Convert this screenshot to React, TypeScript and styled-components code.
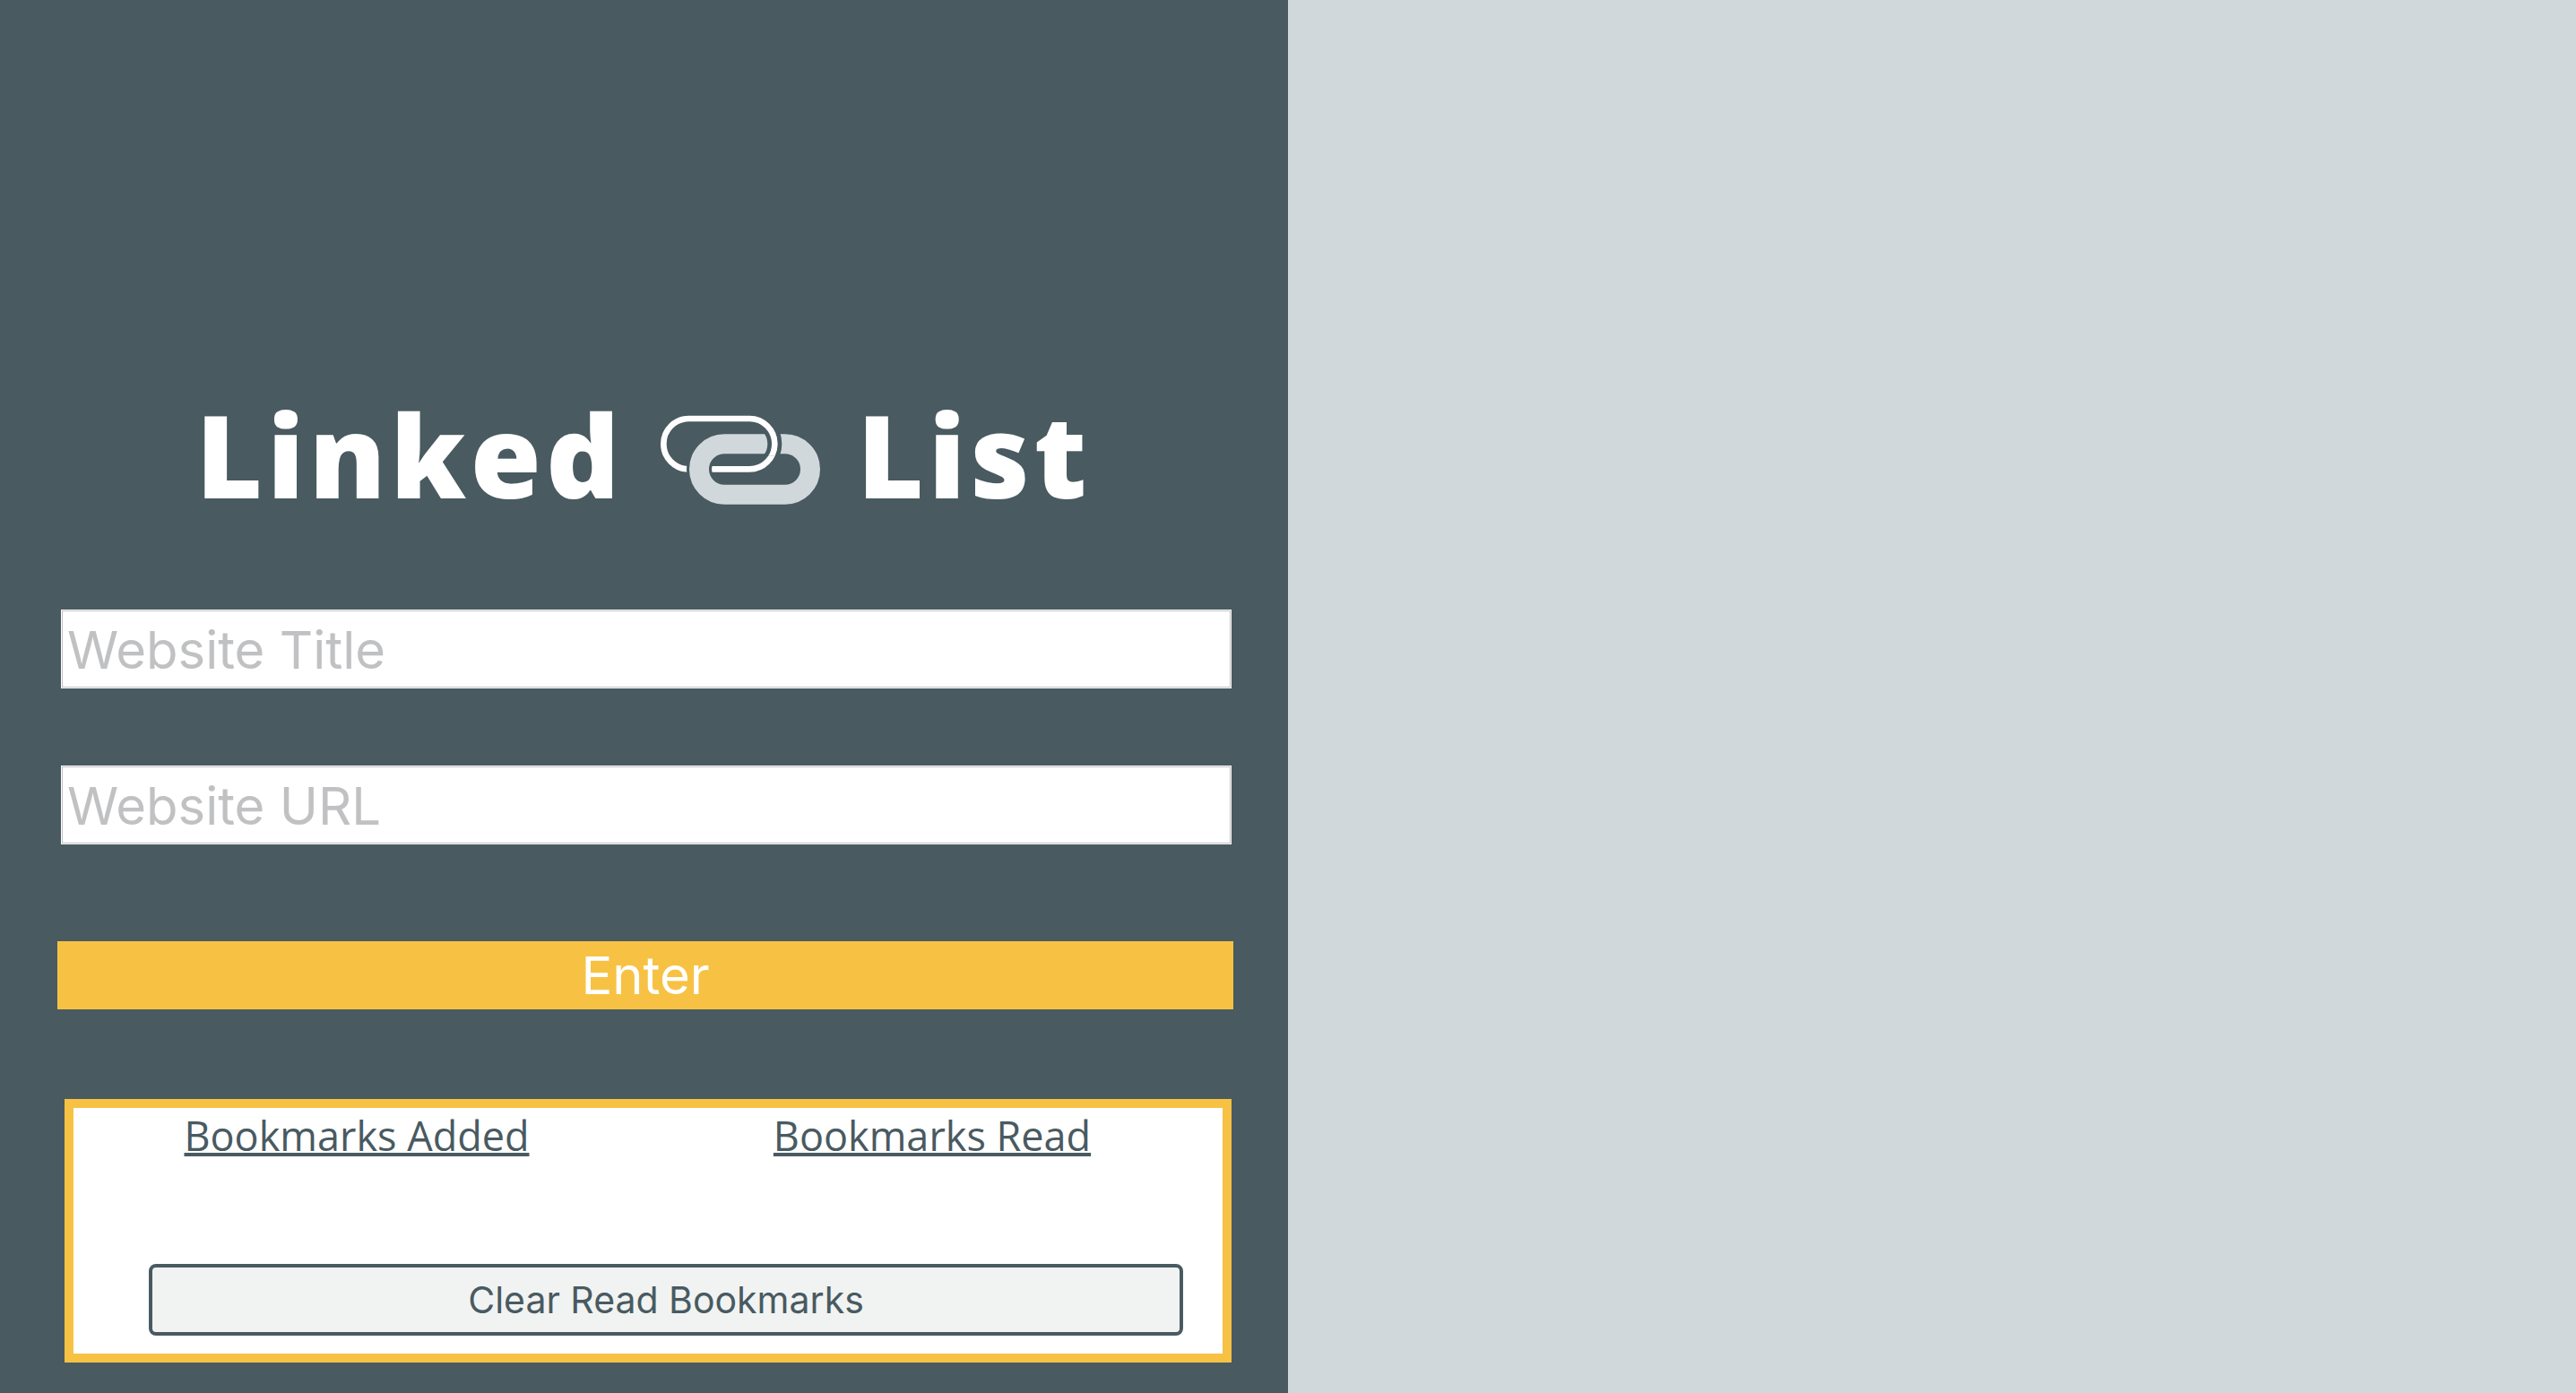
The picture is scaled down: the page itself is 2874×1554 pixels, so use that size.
import React, { useState } from 'react';
import styled, { createGlobalStyle } from 'styled-components';

const color = {
  slate: '#495a61',
  mist: '#d0d8db',
  amber: '#f7c244',
  paper: '#f1f3f2',
  hint: '#c0c1c3',
};

const GlobalStyle = createGlobalStyle`
  *, *::before, *::after { box-sizing: border-box; }
  body { margin: 0; background: ${color.mist}; }
`;

const Page = styled.div`
  display: grid;
  grid-template-columns: 1fr 1fr;
  min-height: 100vh;
  font-family: 'Open Sans', sans-serif;
  color: ${color.slate};
`;

const Sidebar = styled.section`
  display: flex;
  flex-direction: column;
  justify-content: flex-end;
  padding: 40px 61px 34px 64px;
  background: ${color.slate};
`;

const BookmarkList = styled.main`
  background: ${color.mist};
`;

const Title = styled.h1`
  display: flex;
  justify-content: center;
  align-items: center;
  gap: 40px;
  margin: 0 0 86px;
  padding-right: 4px;
  color: #fff;
  font-size: 128px;
  font-weight: 800;
  line-height: 174px;
  letter-spacing: 5px;
`;

const LinkIcon = styled.svg`
  width: 180px;
  height: 102px;
  margin-top: 12px;
`;

const Form = styled.form`
  display: flex;
  flex-direction: column;
`;

const Field = styled.input`
  height: 88px;
  margin: 0 2px 86px 4px;
  padding: 2px 6px 0;
  border: 1px solid #fff;
  border-radius: 0;
  outline: 1px solid ${color.hint};
  outline-offset: -2px;
  background: #fff;
  color: ${color.slate};
  font-family: Inter, sans-serif;
  font-size: 58px;

  &::placeholder {
    color: ${color.hint};
    opacity: 1;
  }
`;

const SubmitButton = styled.button`
  height: 76px;
  margin: 22px 0 100px;
  padding: 0;
  border: 0;
  background: ${color.amber};
  color: #fff;
  font-family: Inter, sans-serif;
  font-size: 58px;
  line-height: 76px;
`;

const Summary = styled.section`
  display: flex;
  flex-direction: column;
  height: 294px;
  margin: 0 2px 0 8px;
  border: 10px solid ${color.amber};
  background: #fff;
`;

const Counters = styled.div`
  display: grid;
  grid-template-columns: 1fr 1fr;
  gap: 10px;
  padding-right: 8px;
`;

const Counter = styled.h2`
  margin: 0;
  font-size: 45px;
  font-weight: 400;
  line-height: 62px;
  text-align: center;
  text-decoration: underline;
  text-decoration-thickness: 4px;
`;

const ClearButton = styled.button`
  height: 80px;
  margin: auto 44px 20px 84px;
  padding: 0;
  border: 4px solid ${color.slate};
  border-radius: 8px;
  background: ${color.paper};
  color: ${color.slate};
  font-family: Inter, sans-serif;
  font-size: 41px;
`;

function Logo() {
  const thin = 'M172.500 110 H375.500 A84.500 84.500 0 0 1 375.500 279 H172.500 A84.500 84.500 0 0 1 172.500 110 Z';
  const thick = 'M291.500 195 H494.500 A84.500 84.500 0 0 1 494.500 364 H291.500 A84.500 84.500 0 0 1 291.500 195 Z';
  return (
    <LinkIcon viewBox="75 95 540 306" fill="none" aria-hidden="true">
      <defs>
        <clipPath id="under"><rect x="150" y="255" width="120" height="50" /></clipPath>
        <clipPath id="over"><rect x="400" y="155" width="100" height="80" /></clipPath>
      </defs>
      <path d={thin} stroke="#fff" strokeWidth="20" />
      <path d={thick} stroke={color.slate} strokeWidth="84" clipPath="url(#under)" />
      <path d={thick} stroke={color.mist} strokeWidth="66" />
      <g clipPath="url(#over)">
        <path d={thin} stroke={color.slate} strokeWidth="48" />
        <path d={thin} stroke="#fff" strokeWidth="20" />
      </g>
    </LinkIcon>
  );
}

export default function App() {
  const [title, setTitle] = useState('');
  const [url, setUrl] = useState('');

  return (
    <Page>
      <GlobalStyle />
      <Sidebar>
        <Title>
          <span>Linked</span>
          <Logo />
          <span>List</span>
        </Title>
        <Form onSubmit={(event) => event.preventDefault()}>
          <Field
            type="text"
            aria-label="Website Title"
            placeholder="Website Title"
            value={title}
            onChange={(event) => setTitle(event.target.value)}
          />
          <Field
            type="text"
            aria-label="Website URL"
            placeholder="Website URL"
            value={url}
            onChange={(event) => setUrl(event.target.value)}
          />
          <SubmitButton type="submit">Enter</SubmitButton>
        </Form>
        <Summary>
          <Counters>
            <Counter>Bookmarks Added</Counter>
            <Counter>Bookmarks Read</Counter>
          </Counters>
          <ClearButton type="button">Clear Read Bookmarks</ClearButton>
        </Summary>
      </Sidebar>
      <BookmarkList />
    </Page>
  );
}
